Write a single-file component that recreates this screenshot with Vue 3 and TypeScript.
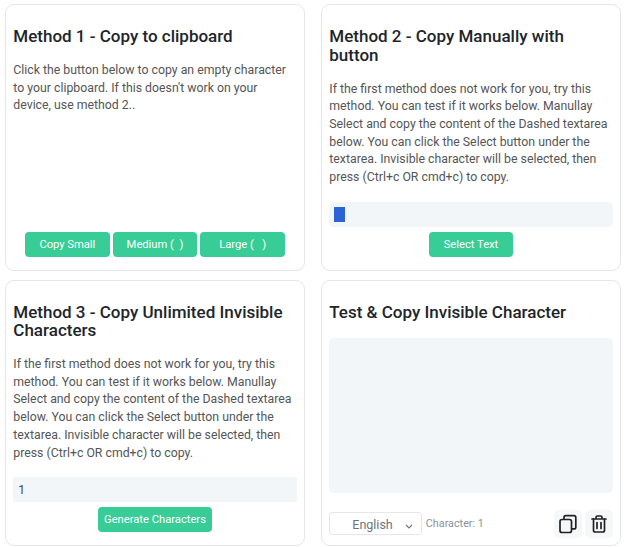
<script setup lang="ts">
const methodText =
  "If the first method does not work for you, try this method. You can test if it works below. Manullay Select and copy the content of the Dashed textarea below. You can click the Select button under the textarea. Invisible character will be selected, then press (Ctrl+c OR cmd+c) to copy.";
</script>

<template>
  <main class="page">
    <section class="card">
      <h2>Method 1 - Copy to clipboard</h2>
      <p>Click the button below to copy an empty character to your clipboard. If this doesn't work on your device, use method 2..</p>
      <div class="actions tight">
        <button class="wide">Copy Small</button>
        <button class="wide">Medium (&nbsp; )</button>
        <button class="wide">Large (&nbsp; &nbsp;)</button>
      </div>
    </section>

    <section class="card">
      <h2>Method 2 - Copy Manually with button</h2>
      <p>{{ methodText }}</p>
      <div class="field rounded"><span class="selection"></span></div>
      <div class="actions">
        <button class="wide">Select Text</button>
      </div>
    </section>

    <section class="card">
      <h2>Method 3 - Copy Unlimited Invisible Characters</h2>
      <p>{{ methodText }}</p>
      <div class="field number">1</div>
      <div class="actions">
        <button class="gen">Generate Characters</button>
      </div>
    </section>

    <section class="card test">
      <h2>Test &amp; Copy Invisible Character</h2>
      <div class="area"></div>
      <div class="footer">
        <div class="select">
          <span>English</span>
          <svg class="chevron" width="8" height="5" viewBox="0 0 8 5" fill="none" stroke="#777" stroke-width="1.1">
            <path d="M1 1l3 3 3-3" />
          </svg>
        </div>
        <span class="count">Character: 1</span>
        <div class="icons">
          <div class="icon">
            <svg width="20" height="20" viewBox="0 0 20 20" fill="none" stroke="#222" stroke-width="1.7" stroke-linejoin="round">
              <rect x="2" y="5.5" width="11.5" height="13" rx="2" />
              <path d="M6 5.5V3.4A1.7 1.7 0 0 1 7.7 1.7h8.2a1.9 1.9 0 0 1 1.9 1.9v9.6a1.7 1.7 0 0 1-1.7 1.7h-2.6" />
            </svg>
          </div>
          <div class="icon">
            <svg width="20" height="20" viewBox="0 0 20 20" fill="none" stroke="#222" stroke-width="1.7" stroke-linecap="round" stroke-linejoin="round">
              <path d="M3 5h14M7 5V3.4C7 2.6 7.6 2 8.4 2h3.2c.8 0 1.4.6 1.4 1.4V5" />
              <path d="M4.5 5v11.2c0 1 .8 1.8 1.8 1.8h7.4c1 0 1.8-.8 1.8-1.8V5" />
              <path d="M8 8.5v6M12 8.5v6" />
            </svg>
          </div>
        </div>
      </div>
    </section>
  </main>
</template>

<style>
html, body { margin: 0; background: #fff; }
</style>

<style scoped>
.page {
  width: 624px;
  height: 547px;
  box-sizing: border-box;
  padding: 4px 3px 1px 5px;
  display: grid;
  grid-template-columns: 300px 300px;
  grid-template-rows: 267px 266px;
  column-gap: 16px;
  row-gap: 8.5px;
  font-family: Roboto, "Liberation Sans", sans-serif;
}
.card {
  box-sizing: border-box;
  border: 1px solid #e4e6e8;
  border-radius: 9px;
  padding: 22px 7.3px 13px;
  display: flex;
  flex-direction: column;
  background: #fff;
  min-width: 0;
}
.test { padding-bottom: 7px; }
h2 {
  margin: 0 0 16.5px;
  font-size: 17px;
  line-height: 18.5px;
  font-weight: 500;
  color: #212529;
}
p {
  margin: 0;
  font-size: 12.3px;
  line-height: 17.7px;
  color: #555;
}
.actions {
  margin-top: auto;
  display: flex;
  justify-content: center;
  gap: 3px;
}
button {
  height: 25px;
  border: 0;
  padding: 0;
  border-radius: 4px;
  background: #38cc97;
  color: #fff;
  font: 400 11.2px Roboto, sans-serif;
}
.wide { width: 84.67px; }
.gen { width: 114px; }
.field {
  height: 25px;
  box-sizing: border-box;
  margin-top: auto;
  margin-bottom: 5px;
  background: #f3f6f8;
  display: flex;
  align-items: center;
  padding-left: 5px;
}
.field + .actions { margin-top: 0; }
.rounded { border-radius: 5px; }
.selection {
  width: 11px;
  height: 15px;
  background: #2d62d6;
}
.number {
  font-size: 12px;
  color: #444;
  padding-top: 2px;
}
.area {
  height: 155px;
  margin-top: 0;
  border-radius: 5px;
  background: #f3f6f8;
}
.footer {
  margin-top: auto;
  display: flex;
  align-items: center;
}
.select {
  position: relative;
  width: 92.5px;
  height: 23px;
  box-sizing: border-box;
  border: 1px solid #e4e6e8;
  border-radius: 3px;
  display: flex;
  align-items: center;
  padding: 2px 0 0 22px;
  font-size: 12.5px;
  color: #6c757d;
}
.chevron {
  position: absolute;
  right: 8px;
  top: 11px;
}
.count {
  margin-left: 4px;
  font-size: 10.8px;
  color: #8b9298;
}
.icons {
  margin-left: auto;
  display: flex;
  gap: 3px;
}
.icon {
  width: 27.7px;
  height: 27.5px;
  border-radius: 5px;
  background: #f5f7f9;
  display: flex;
  align-items: center;
  justify-content: center;
}
</style>
